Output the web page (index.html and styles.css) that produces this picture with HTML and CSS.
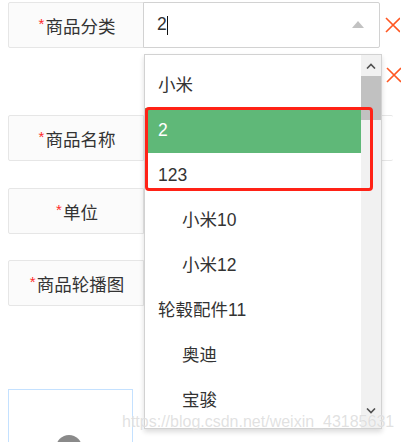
FILE: index.html
```html
<!DOCTYPE html>
<html lang="zh">
<head>
<meta charset="utf-8">
<link rel="stylesheet" href="styles.css">
</head>
<body>
<div class="form">
  <div class="row row-first">
    <div class="label"><span class="req">*</span>商品分类</div>
    <div class="input select">
      <span class="val">2</span><span class="caret"></span>
      <span class="tri"></span>
    </div>
    <svg class="del" width="15" height="16" viewBox="0 0 15 16"><path d="M1 1L15 15M15 1L1 15" stroke="#ff5722" stroke-width="1.6" fill="none"/></svg>
  </div>
  <div class="row row-sub">
    <svg class="del del-sub" width="15" height="16" viewBox="0 0 15 16"><path d="M1 1L15 15M15 1L1 15" stroke="#ff5722" stroke-width="1.6" fill="none"/></svg>
  </div>
  <div class="row row-name">
    <div class="label"><span class="req">*</span>商品名称</div>
    <div class="input wide"></div>
  </div>
  <div class="row row-unit">
    <div class="label"><span class="req">*</span>单位</div>
    <div class="input short"></div>
  </div>
  <div class="row row-pics">
    <div class="label"><span class="req">*</span>商品轮播图</div>
    <div class="input short"></div>
  </div>
  <div class="upload"><span class="avatar"></span></div>
</div>

<div class="dropdown">
  <ul class="options">
    <li class="opt">小米</li>
    <li class="opt this">2</li>
    <li class="opt">123</li>
    <li class="opt child">小米10</li>
    <li class="opt child">小米12</li>
    <li class="opt">轮毂配件11</li>
    <li class="opt child">奥迪</li>
    <li class="opt child">宝骏</li>
  </ul>
  <div class="scrollbar">
    <div class="sb-btn"><svg width="10" height="6" viewBox="0 0 10 6"><path d="M1 5.5L5 1.5L9 5.5" stroke="#505050" stroke-width="1.6" fill="none"/></svg></div>
    <div class="sb-thumb"></div>
    <div class="sb-track"></div>
    <div class="sb-btn sb-down"><svg width="10" height="6" viewBox="0 0 10 6"><path d="M1 0.5L5 4.5L9 0.5" stroke="#505050" stroke-width="1.6" fill="none"/></svg></div>
  </div>
</div>

<div class="annot"></div>
<div class="watermark">https://blog.csdn.net/weixin_43185631</div>
</body>
</html>
```

FILE: styles.css
```css
html, body {
  margin: 0;
  padding: 0;
  background: #fff;
  overflow: hidden;
}
body {
  width: 401px;
  height: 443px;
  position: relative;
  font-family: "Liberation Sans", "Noto Sans CJK SC", sans-serif;
  font-size: 17.5px;
  color: #333;
}
.form {
  padding: 2px 0 0 8px;
  display: flex;
  flex-direction: column;
}
.row {
  display: flex;
  align-items: center;
}
.label {
  box-sizing: border-box;
  width: 136px;
  height: 46px;
  flex: none;
  border: 1px solid #e6e6e6;
  border-radius: 2px 0 0 2px;
  background: #fbfbfb;
  display: flex;
  align-items: center;
  justify-content: center;
  padding-left: 2px;
}
.req {
  color: #ff2a2a;
  font-size: 15px;
  margin-right: 1px;
  position: relative;
  top: -2px;
}
.input {
  box-sizing: border-box;
  height: 46px;
  flex: none;
  border: 1px solid #e6e6e6;
  border-left: none;
  border-radius: 0 2px 2px 0;
  background: #fff;
}
.select {
  width: 237px;
  border-color: #d2d2d2;
  border-left: 1px solid #d2d2d2;
  margin-left: -1px;
  display: flex;
  align-items: center;
  padding-left: 13px;
  position: relative;
}
.val { line-height: 1; }
.caret {
  width: 1px;
  height: 19px;
  background: #111;
}
.tri {
  position: absolute;
  right: 15px;
  top: 18px;
  width: 0;
  height: 0;
  border-left: 6px solid transparent;
  border-right: 6px solid transparent;
  border-bottom: 7px solid #c2c2c2;
}
.del {
  flex: none;
  margin-left: 5px;
}
.row-first { height: 46px; }
.row-sub {
  height: 67px;
  align-items: flex-start;
  padding-top: 19px;
  box-sizing: border-box;
}
.del-sub { margin-left: 378px; }
.row-unit { margin-top: 27px; }
.row-pics { margin-top: 26px; }
.wide { width: 249px; border-right: none; }
.short { width: 150px; }
.upload {
  margin-top: 83px;
  box-sizing: border-box;
  width: 125px;
  height: 53px;
  border: 1px solid #c4e1ff;
  border-bottom: none;
  position: relative;
  overflow: hidden;
}
.avatar {
  position: absolute;
  left: 47px;
  top: 45px;
  width: 26px;
  height: 26px;
  border-radius: 50%;
  background: #8a8a8a;
}
.dropdown {
  position: absolute;
  left: 144px;
  top: 54px;
  width: 238px;
  height: 375px;
  box-sizing: border-box;
  border: 1px solid #d2d2d2;
  background: #fff;
  box-shadow: 0 3px 5px rgba(0,0,0,0.14);
  display: flex;
  overflow: hidden;
}
.options {
  list-style: none;
  margin: 0;
  padding: 7.5px 0 0 0;
  flex: 1;
}
.opt {
  height: 45px;
  line-height: 45px;
  padding-left: 13px;
  white-space: nowrap;
}
.opt.child { padding-left: 37px; }
.opt.this {
  background: #5fb878;
  color: #fff;
}
.scrollbar {
  width: 20px;
  flex: none;
  background: #f1f1f1;
  display: flex;
  flex-direction: column;
}
.sb-btn {
  height: 21px;
  display: flex;
  align-items: center;
  justify-content: center;
  flex: none;
}
.sb-thumb {
  height: 44px;
  background: #c1c1c1;
  flex: none;
}
.sb-track { flex: 1; }
.sb-down { height: 22px; align-items: flex-start; padding-top: 2px; box-sizing: border-box; }
.annot {
  position: absolute;
  left: 145px;
  top: 107px;
  width: 228px;
  height: 84px;
  box-sizing: border-box;
  border: 3px solid #ff2216;
  border-radius: 4px;
}
.watermark {
  position: absolute;
  left: 122px;
  top: 413px;
  font-family: "Liberation Sans", sans-serif;
  font-size: 16px;
  color: rgba(200,200,200,0.55);
  text-shadow: 0 0 1px rgba(255,255,255,0.9);
  white-space: nowrap;
}
```
